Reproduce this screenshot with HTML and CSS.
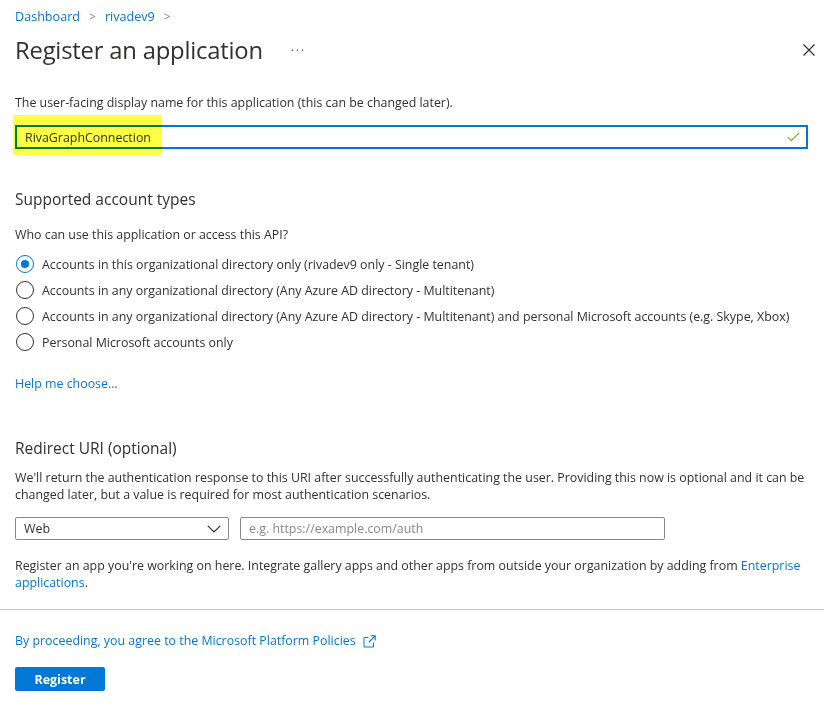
FILE: index.html
```html
<!DOCTYPE html>
<html lang="en">
<head>
<meta charset="utf-8">
<title>Register an application</title>
<link rel="stylesheet" href="styles.css">
</head>
<body>
<div class="blade">
  <div class="content">
    <nav class="crumbs">
      <a class="link" href="#">Dashboard</a>
      <span class="sep">&gt;</span>
      <a class="link" href="#">rivadev9</a>
      <span class="sep">&gt;</span>
    </nav>
    <header class="titlebar">
      <h1 class="title">Register an application</h1>
      <span class="more">&middot;&middot;&middot;</span>
      <span class="spacer"></span>
      <svg class="close" width="12" height="12" viewBox="0 0 12 12"><path d="M0.5 0.5 L11.5 11.5 M11.5 0.5 L0.5 11.5" stroke="#323130" stroke-width="1.2" fill="none"/></svg>
    </header>

    <section class="name-section">
      <p class="label">The user-facing display name for this application (this can be changed later).</p>
      <div class="textbox active">
        <span class="value">RivaGraphConnection</span>
        <svg class="check" width="13" height="10" viewBox="0 0 13 10"><path d="M0.8 5.2 L4.3 8.7 L12.2 0.8" stroke="#6bb700" stroke-width="1.2" fill="none"/></svg>
        <span class="highlight"></span>
      </div>
    </section>

    <section class="accounts">
      <h2 class="heading">Supported account types</h2>
      <p class="label">Who can use this application or access this API?</p>
      <div class="radios">
        <label class="radio"><span class="dot checked"></span>Accounts in this organizational directory only (rivadev9 only - Single tenant)</label>
        <label class="radio"><span class="dot"></span>Accounts in any organizational directory (Any Azure AD directory - Multitenant)</label>
        <label class="radio"><span class="dot"></span>Accounts in any organizational directory (Any Azure AD directory - Multitenant) and personal Microsoft accounts (e.g. Skype, Xbox)</label>
        <label class="radio"><span class="dot"></span>Personal Microsoft accounts only</label>
      </div>
      <a class="link help" href="#">Help me choose...</a>
    </section>

    <section class="redirect">
      <h2 class="heading">Redirect URI (optional)</h2>
      <p class="para">We'll return the authentication response to this URI after successfully authenticating the user. Providing this now is optional and it can be changed later, but a value is required for most authentication scenarios.</p>
      <div class="uri-row">
        <div class="select">
          <span>Web</span>
          <svg width="14" height="8" viewBox="0 0 14 8"><path d="M0.8 0.8 L7 7 L13.2 0.8" stroke="#323130" stroke-width="1.2" fill="none"/></svg>
        </div>
        <div class="uri-input"><span class="placeholder">e.g. https://example.com/auth</span></div>
      </div>
      <p class="para">Register an app you're working on here. Integrate gallery apps and other apps from outside your organization by adding from <a class="link" href="#">Enterprise</a><br><a class="link" href="#">applications</a>.</p>
    </section>
  </div>

  <footer class="footer">
    <a class="link policy" href="#">By proceeding, you agree to the Microsoft Platform Policies
      <svg width="13" height="13" viewBox="0 0 13 13"><path d="M5.5 2.5 H1 V12 H10.5 V7.5" stroke="#0078d4" stroke-width="1" fill="none"/><path d="M6 7 L12 1 M7.5 0.8 H12.2 V5.5" stroke="#0078d4" stroke-width="1.1" fill="none"/></svg>
    </a>
    <button class="primary">Register</button>
  </footer>
</div>
</body>
</html>
```

FILE: styles.css
```css
* { box-sizing: border-box; }
html, body { margin: 0; padding: 0; background: #fff; }
body {
  font-family: "Open Sans", "Noto Sans", sans-serif;
  font-size: 12.4px;
  color: #323130;
  width: 824px;
  height: 706px;
  overflow: hidden;
}
p { margin: 0; }
h1, h2 { margin: 0; font-weight: 400; }
.link { color: #0078d4; text-decoration: none; }

.content { padding: 0 16px 0 15px; }

.crumbs {
  display: flex;
  align-items: center;
  gap: 9px;
  height: 18px;
  margin-top: 8px;
  line-height: 18px;
  font-size: 12.6px;
}
.crumbs .sep { color: #8a8886; font-size: 12px; }

.titlebar {
  display: flex;
  align-items: center;
  height: 30px;
  margin-top: 9px;
}
.title { font-size: 23.8px; font-weight: 400; letter-spacing: -0.2px; color: #323130; line-height: 30px; }
.more { margin-left: 28px; color: #605e5c; font-size: 13px; letter-spacing: 1.5px; position: relative; top: 0; }
.spacer { flex: 1; }
.close { margin-right: -7px; }

.name-section { margin-top: 29px; }
.label { line-height: 18px; }
.name-section .label { margin-bottom: 13px; }

.textbox {
  position: relative;
  height: 24px;
  border: 2px solid #0078d4;
  display: flex;
  align-items: center;
  padding: 0 6px 0 8px;
}
.textbox .value { flex: 1; }
.highlight {
  position: absolute;
  left: -4px;
  top: -12px;
  width: 149px;
  height: 40px;
  background: #ffff44;
  mix-blend-mode: multiply;
}

.accounts { margin-top: 39px; }
.heading { font-size: 15.5px; line-height: 22px; color: #323130; }
.accounts .heading { margin-bottom: 16px; }
.accounts .label { margin-bottom: 7px; }
.radios { display: flex; flex-direction: column; }
.radio {
  display: flex;
  align-items: center;
  height: 26px;
  gap: 8px;
}
.dot {
  width: 18px;
  height: 18px;
  margin-left: 1px;
  border: 1px solid #323130;
  border-radius: 50%;
  display: flex;
  align-items: center;
  justify-content: center;
}
.dot.checked { border-color: #0078d4; }
.dot.checked::after {
  content: "";
  width: 8px;
  height: 8px;
  border-radius: 50%;
  background: #0078d4;
}
.help { display: inline-block; margin-top: 20px; line-height: 18px; }

.redirect { margin-top: 44px; }
.redirect .heading { margin-bottom: 10px; }
.para { line-height: 17px; }
.uri-row {
  display: flex;
  gap: 11px;
  margin: 14px 0 17px;
}
.select {
  width: 214px;
  height: 23px;
  border: 1px solid #8a8886;
  border-radius: 2px;
  display: flex;
  align-items: center;
  justify-content: space-between;
  padding: 0 7px 0 8px;
}
.uri-input {
  width: 425px;
  height: 23px;
  border: 1px solid #8a8886;
  border-radius: 2px;
  display: flex;
  align-items: center;
  padding: 0 8px;
}
.placeholder { color: #8a8886; }

.footer {
  margin-top: 18px;
  border-top: 1px solid #c8c6c4;
  padding: 22px 15px 0;
  display: flex;
  flex-direction: column;
  align-items: flex-start;
}
.policy { display: flex; align-items: center; gap: 7px; line-height: 18px; }
.primary {
  margin-top: 17px;
  width: 90px;
  height: 24px;
  background: #0078d4;
  color: #fff;
  border: none;
  border-radius: 2px;
  font-family: inherit;
  font-size: 12.5px;
  font-weight: 700;
  padding: 0;
}
```
